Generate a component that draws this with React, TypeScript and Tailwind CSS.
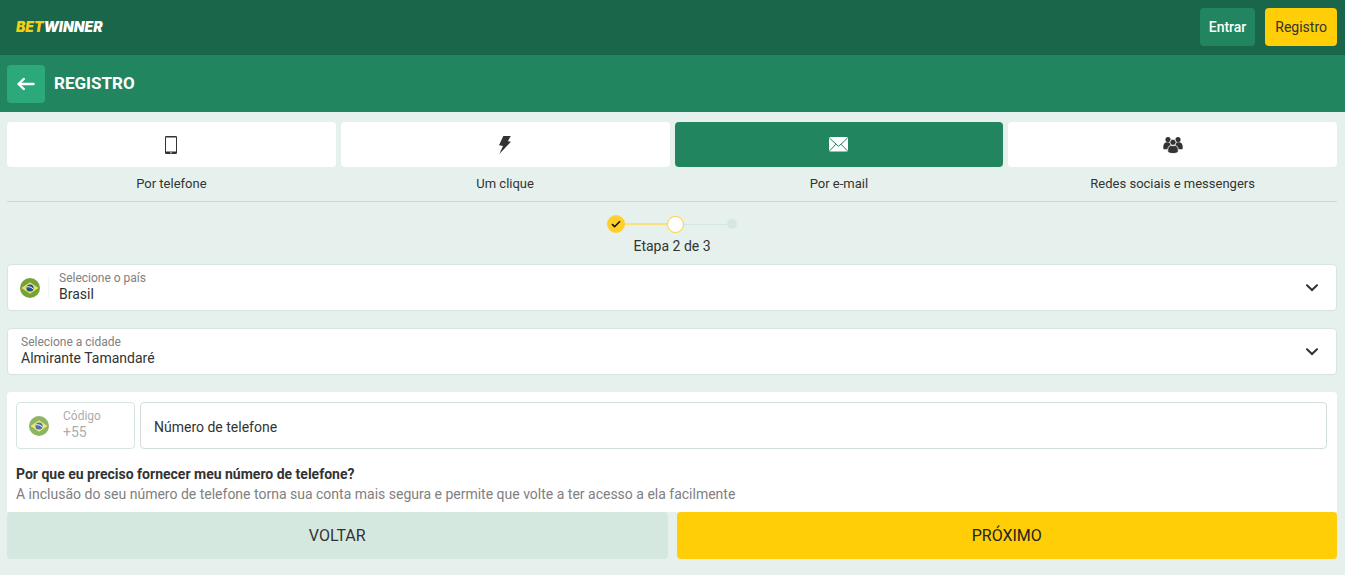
import { useState } from "react"
import type { ReactNode } from "react"
import clsx from "clsx"

const PhoneIcon = () => (
  <svg width="12" height="18" viewBox="0 0 12 18" fill="currentColor">
    <path
      fillRule="evenodd"
      d="M1.2 0h9.6A1.2 1.2 0 0 1 12 1.2v15.6a1.2 1.2 0 0 1-1.2 1.2H1.2A1.2 1.2 0 0 1 0 16.8V1.2A1.2 1.2 0 0 1 1.2 0ZM1 1.6v14h10v-14ZM5 16.4v.8h2v-.8Z"
    />
  </svg>
)

const BoltIcon = () => (
  <svg width="12" height="18" viewBox="0 0 12 18" fill="currentColor">
    <path d="M4.300 0H11.800L8.800 5.200 12 5.700.300 18 4 10 0 9.300Z" />
  </svg>
)

const MailIcon = () => (
  <svg width="19" height="15" viewBox="0 0 19 15" fill="none">
    <rect width="19" height="14.500" rx="1.500" fill="currentColor" />
    <path d="M.6 1.200 9.500 9.400 18.400 1.200M.6 13.800 7 7.200M18.400 13.800 12 7.200" stroke="#21865f" strokeWidth="1" />
  </svg>
)

const PeopleIcon = () => (
  <svg width="20" height="18" viewBox="0 0 20 18" fill="currentColor">
    <circle cx="5" cy="3.600" r="2.600" />
    <circle cx="15" cy="3.600" r="2.600" />
    <path d="M.5 13.300C0 11 .2 8.800 1.500 7.300c.7-.8 1.800-1.100 3-1.100L7.500 6.800 8 13.300ZM19.500 13.300c.5-2.300.3-4.500-1-6-.7-.8-1.800-1.100-3-1.100l-3 .6-.5 6.500Z" />
    <circle cx="10" cy="6.300" r="3.100" stroke="#fff" strokeWidth="0.800" />
    <path
      d="M7.300 9.600h5.400c1.600.4 2.500 2.200 2.500 4v2c-.5 1.300-2.400 1.900-5.200 1.900s-4.700-.6-5.200-1.900v-2c0-1.800.9-3.600 2.500-4Z"
      stroke="#fff"
      strokeWidth="0.800"
    />
  </svg>
)

const BrazilFlag = () => (
  <svg width="20" height="20" viewBox="0 0 20 20" className="shrink-0">
    <circle cx="10" cy="10" r="10" fill="#73a33b" />
    <path d="M1.500 10 10 4.200 18.500 10 10 15.800Z" fill="#ece25a" />
    <circle cx="10" cy="10" r="3.600" fill="#1d4f9a" />
    <path d="M6.700 8.800c2.400-.4 5 .4 6.700 2.400" stroke="#fff" strokeWidth="1" fill="none" />
  </svg>
)

const Chevron = () => (
  <svg width="14" height="8" viewBox="0 0 14 8" fill="none" className="pointer-events-none mr-[17px] self-center justify-self-end [grid-area:1/1]">
    <path d="M2 1.200 7 6 12 1.200" stroke="#333" strokeWidth="2" strokeLinecap="round" />
  </svg>
)

const methods = [
  { id: "phone", name: "Por telefone", icon: <PhoneIcon /> },
  { id: "click", name: "Um clique", icon: <BoltIcon /> },
  { id: "email", name: "Por e-mail", icon: <MailIcon /> },
  { id: "social", name: "Redes sociais e messengers", icon: <PeopleIcon /> },
]

interface SelectFieldProps {
  id: string
  label: string
  options: string[]
  icon?: ReactNode
}

const SelectField = ({ id, label, options, icon }: SelectFieldProps) => (
  <div className="grid rounded border border-[#d3e6df] bg-white">
    {icon && (
      <div className="pointer-events-none z-10 my-3 flex w-[41px] items-center border-r border-[#edf4f1] pl-3 [grid-area:1/1]">
        {icon}
      </div>
    )}
    <label
      htmlFor={id}
      className={clsx(
        "pointer-events-none z-10 self-start justify-self-start pt-[5px] text-xs text-[#808080] [grid-area:1/1]",
        icon ? "pl-[51px]" : "pl-[13px]"
      )}
    >
      {label}
    </label>
    <select
      id={id}
      className={clsx(
        "h-[45px] w-full appearance-none rounded bg-transparent pt-3 pr-10 text-sm text-[#333] [grid-area:1/1]",
        icon ? "pl-[51px]" : "pl-[13px]"
      )}
    >
      {options.map((o) => (
        <option key={o}>{o}</option>
      ))}
    </select>
    <Chevron />
  </div>
)

const Stepper = () => (
  <div className="flex flex-col items-center pt-[13px]">
    <div className="flex items-center">
      <span className="flex size-[18px] items-center justify-center rounded-full bg-[#ffd02b]">
        <svg width="10" height="8" viewBox="0 0 10 8" fill="none">
          <path d="M1 4.200 3.600 6.700 9 1.200" stroke="#111" strokeWidth="1.600" />
        </svg>
      </span>
      <span className="h-[2px] w-[42px] bg-[#f7e27e]" />
      <span className="size-[17px] rounded-full border border-[#f3cf3f] bg-white" />
      <span className="h-px w-[43px] bg-[#d5e8e0]" />
      <span className="size-[10px] rounded-full bg-[#d5e8e0]" />
    </div>
    <p className="mt-[3px] text-sm text-[#333]">Etapa 2 de 3</p>
  </div>
)

const App = () => {
  const [method, setMethod] = useState("email")

  return (
    <div className="min-h-screen bg-[#e6f1ed] font-[Roboto,sans-serif] text-[#333]">
      <header className="flex h-[55px] items-center justify-between bg-[#1a664a] pr-2 pb-[2px] pl-4">
        <a href="#" className="font-[Inter,sans-serif] text-sm font-black text-white italic">
          <span className="text-[#f5cf13]">BET</span>
          <span>WINNER</span>
        </a>
        <div className="flex gap-[10px]">
          <button className="h-[38px] rounded bg-[#21865f] px-[9px] text-sm font-medium text-white">Entrar</button>
          <button className="h-[38px] rounded bg-[#ffce07] px-[10px] text-sm text-[#333]">Registro</button>
        </div>
      </header>

      <div className="flex h-[57px] items-center gap-[9px] bg-[#21865f] pl-[7px] text-white">
        <button aria-label="Voltar" className="flex size-[38px] items-center justify-center rounded bg-[#2ca97b]">
          <svg width="18" height="14" viewBox="0 0 18 14" fill="none" stroke="currentColor" strokeWidth="2.400" strokeLinecap="round" strokeLinejoin="round">
            <path d="M16.500 7H1.800M6.800 2 1.500 7l5.300 5" />
          </svg>
        </button>
        <h1 className="text-[17px] font-bold">REGISTRO</h1>
      </div>

      <main className="pt-[10px] pr-2 pb-4 pl-[7px]">
        <div className="grid grid-cols-4 gap-[5px] border-b border-[#c5dbd3] pb-2">
          {methods.map((m) => (
            <button key={m.id} onClick={() => setMethod(m.id)} className="flex flex-col items-center gap-2 text-[13px]">
              <span
                className={clsx(
                  "flex h-[45px] w-full items-center justify-center rounded",
                  method === m.id ? "bg-[#21865f] text-white" : "bg-white text-[#333]"
                )}
              >
                {m.icon}
              </span>
              <span className="leading-[18px]">{m.name}</span>
            </button>
          ))}
        </div>

        <Stepper />

        <form onSubmit={(e) => e.preventDefault()} className="mt-2">
          <div className="flex flex-col gap-[17px]">
            <SelectField id="country" label="Selecione o país" options={["Brasil"]} icon={<BrazilFlag />} />
            <SelectField id="city" label="Selecione a cidade" options={["Almirante Tamandaré"]} />

            <section className="rounded-t bg-white pt-[10px] pr-[10px] pb-2 pl-[9px]">
              <div className="flex gap-[5px]">
                <div className="flex h-[47px] w-[119px] items-center gap-[14px] rounded border border-[#d3e6df] pl-3">
                  <span className="opacity-80">
                    <BrazilFlag />
                  </span>
                  <div className="flex flex-col pb-[3px] text-[#adadad]">
                    <label htmlFor="code" className="text-xs">Código</label>
                    <input id="code" defaultValue="+55" disabled className="w-12 text-sm leading-4" />
                  </div>
                </div>
                <div className="grid h-[47px] flex-1 rounded border border-[#d3dedb]">
                  <input id="phone" type="tel" placeholder=" " className="peer px-[13px] text-sm outline-none [grid-area:1/1]" />
                  <label
                    htmlFor="phone"
                    className="pointer-events-none hidden self-center pt-[2px] pl-[13px] text-sm [grid-area:1/1] peer-placeholder-shown:block"
                  >
                    Número de telefone
                  </label>
                </div>
              </div>
              <h2 className="mt-[15px] text-sm font-bold">Por que eu preciso fornecer meu número de telefone?</h2>
              <p className="text-sm text-[#808080]">
                A inclusão do seu número de telefone torna sua conta mais segura e permite que volte a ter acesso a ela facilmente
              </p>
            </section>
          </div>

          <div className="grid grid-cols-2 gap-[9px]">
            <button type="button" className="h-[47px] rounded bg-[#d5e8e0] text-base">VOLTAR</button>
            <button type="submit" className="h-[47px] rounded bg-[#ffce07] text-base text-[#222]">PRÓXIMO</button>
          </div>
        </form>
      </main>
    </div>
  )
}

export default App
